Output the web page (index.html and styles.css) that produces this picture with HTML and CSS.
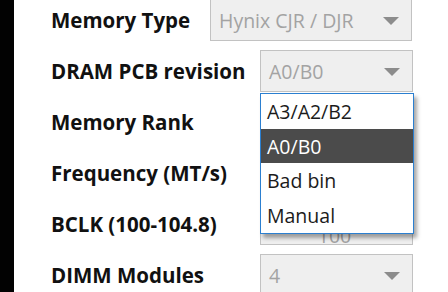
FILE: index.html
```html
<!DOCTYPE html>
<html lang="en">
<head>
  <meta charset="UTF-8">
  <meta name="viewport" content="width=device-width, initial-scale=1">
  <title>Memory Settings</title>
  <link rel="stylesheet" href="styles.css">
</head>
<body>

  <div class="window">
    <div class="edge"></div>
    <div class="settings">

      <div class="row">
        <div class="label">Memory Type</div>
        <div class="combo combo-wide">
          <span class="value">Hynix CJR / DJR</span>
          <span class="arrow"></span>
        </div>
      </div>

      <div class="row">
        <div class="label">DRAM PCB revision</div>
        <div class="combo-wrap">
          <div class="combo">
            <span class="value">A0/B0</span>
            <span class="arrow"></span>
          </div>
          <ul class="dropdown">
            <li>A3/A2/B2</li>
            <li class="selected">A0/B0</li>
            <li>Bad bin</li>
            <li>Manual</li>
          </ul>
        </div>
      </div>

      <div class="row">
        <div class="label">Memory Rank</div>
        <div class="combo">
          <span class="value"></span>
          <span class="arrow"></span>
        </div>
      </div>

      <div class="row">
        <div class="label">Frequency (MT/s)</div>
        <div class="combo">
          <span class="value"></span>
          <span class="arrow"></span>
        </div>
      </div>

      <div class="row">
        <div class="label">BCLK (100-104.8)</div>
        <div class="combo field">
          <span class="value">100</span>
        </div>
      </div>

      <div class="row">
        <div class="label">DIMM Modules</div>
        <div class="combo">
          <span class="value">4</span>
          <span class="arrow"></span>
        </div>
      </div>

    </div>
  </div>

</body>
</html>
```

FILE: styles.css
```css
body {
  margin: 0;
  background: #ffffff;
  font-family: "Open Sans", "Noto Sans", Arial, sans-serif;
  overflow: hidden;
}

.window {
  display: flex;
  height: 292px;
}

.edge {
  width: 14px;
  background: #020202;
  flex-shrink: 0;
}

.settings {
  display: flex;
  flex-direction: column;
  gap: 9px;
  padding-left: 37px;
  margin-top: -1px;
}

.row {
  display: flex;
  align-items: center;
  height: 42px;
}

.label {
  width: 209px;
  font-size: 20.5px;
  font-weight: bold;
  color: #111111;
  white-space: nowrap;
}

.combo {
  box-sizing: border-box;
  width: 153px;
  height: 42px;
  display: flex;
  align-items: center;
  justify-content: space-between;
  padding: 0 12px 0 8px;
  background: #efefef;
  border: 1px solid #c2c2c2;
  color: #a3a3a3;
  font-size: 19.5px;
}

.combo-wide {
  width: 202px;
  margin-left: -50px;
}

.field {
  justify-content: center;
  padding-top: 22px;
}

.arrow {
  width: 0;
  height: 0;
  border-left: 8px solid transparent;
  border-right: 8px solid transparent;
  border-top: 8px solid #8c8c8c;
  margin-top: 2px;
}

.combo-wrap {
  position: relative;
}

.dropdown {
  position: absolute;
  top: 43px;
  left: 0;
  z-index: 2;
  box-sizing: border-box;
  width: 154px;
  margin: 0;
  padding: 0;
  list-style: none;
  background: #ffffff;
  border: 1px solid #2b7fd0;
  box-shadow: 3px 4px 4px rgba(0, 0, 0, 0.35);
}

.dropdown li {
  height: 34.7px;
  display: flex;
  align-items: center;
  padding-left: 6px;
  font-size: 19.5px;
  color: #1b1b1b;
}

.dropdown li.selected {
  background: #4b4b4b;
  color: #ffffff;
}
```
